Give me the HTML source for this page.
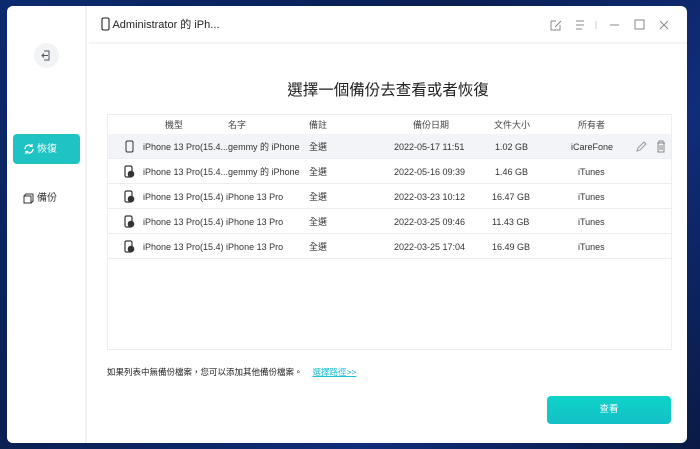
<!DOCTYPE html>
<html><head><meta charset="utf-8"><style>
*{margin:0;padding:0;box-sizing:border-box}
body{width:700px;height:449px;overflow:hidden;background:linear-gradient(135deg,#0b2a6e 0%,#0a1f52 40%,#102d7a 70%,#0a1a44 100%);font-family:"Liberation Sans","Noto Sans CJK TC",sans-serif;position:relative}
.win{position:absolute;left:7px;top:6px;width:680px;height:437px;background:#fff;border-radius:6px;overflow:hidden}
.side{position:absolute;left:0;top:0;width:80px;height:437px;background:#fff;border-right:2px solid #f0f1f4}
.back{position:absolute;left:27px;top:37px;width:25px;height:25px;border-radius:50%;background:#f2f3f6}
.nav1{position:absolute;left:6px;top:128px;width:67px;height:30px;background:#1fc3c3;border-radius:4px;color:#fff;font-size:10px;line-height:32px;padding-left:24px}
.nav2{position:absolute;left:16px;top:186px;font-size:10px;line-height:14px;color:#333;padding-left:14px}
.top{position:absolute;left:82px;top:0;right:0;height:38px;border-bottom:2px solid #f4f5f7}
.title{position:absolute;left:12px;top:10px;font-size:11px;color:#222}
h1{position:absolute;left:82px;right:0;top:72px;text-align:center;font-size:15.5px;font-weight:normal;color:#222}
.tbl{position:absolute;left:100px;top:108px;width:565px;height:236px;border:1px solid #eceef2}
.row{position:absolute;left:0;width:563px;height:25px;border-bottom:1px solid #eceef2;font-size:9px;color:#333}
.row span{position:absolute;top:0;line-height:26px;white-space:nowrap}
.hd{height:19px;top:0;border:none;color:#444}
.hd span{line-height:20px;font-size:9px}
.note{position:absolute;left:100px;top:359px;font-size:8.5px;line-height:14px;color:#222}
.note a{color:#1fbfd0;text-decoration:underline;margin-left:10px}
.btn{position:absolute;left:540px;top:390px;width:124px;height:28px;border-radius:4px;background:linear-gradient(#0fd3c9,#14bfc6);color:#fff;font-size:9.5px;text-align:center;line-height:28px}
</style></head><body>
<div class="win">
 <div class="side">
  <div class="back"><svg width="25" height="25"><path d="M10 8h5v9h-5M8 12.5h6M10 10.5l-2 2 2 2" fill="none" stroke="#555" stroke-width="1"/></svg></div>
  <div class="nav1"><svg style="position:absolute;left:10px;top:9px" width="12" height="12"><path d="M2 6a4 4 0 0 1 7-2.6M10 6a4 4 0 0 1-7 2.6M9 1v2.5H6.5M3 11V8.5h2.5" fill="none" stroke="#fff" stroke-width="1.3"/></svg>恢復</div>
  <div class="nav2"><svg style="position:absolute;left:0;top:1px" width="11" height="11"><path d="M1 3h7v7H1zM1 3l2-2h7v7l-2 2" fill="none" stroke="#333" stroke-width="1"/></svg>備份</div>
 </div>
 <div class="top">
  <div class="title"><svg style="vertical-align:-3px" width="9" height="14"><rect x="1" y="1" width="7" height="12" rx="1.5" fill="none" stroke="#222" stroke-width="1.1"/></svg> Administrator 的 iPh...</div>
  <svg style="position:absolute;left:460px;top:12px" width="120" height="14">
   <path d="M2 3h5M2 3v9h9V7M6 9l6-6" fill="none" stroke="#888" stroke-width="1"/>
   <path d="M27 3h8M27 7h8M27 11h6" stroke="#888" stroke-width="1"/>
   <path d="M47 3v8" stroke="#ccc"/>
   <path d="M61 7h9" stroke="#888"/>
   <rect x="86" y="2" width="9" height="9" fill="none" stroke="#888"/>
   <path d="M111 3l8 8M119 3l-8 8" stroke="#888"/>
  </svg>
 </div>
 <h1>選擇一個備份去查看或者恢復</h1>
 <div class="tbl">
  <div class="row hd"><span style="left:57px">機型</span><span style="left:120px">名字</span><span style="left:201px">備註</span><span style="left:305px">備份日期</span><span style="left:386px">文件大小</span><span style="left:470px">所有者</span></div>
  <div class="row" style="top:19px;background:#f3f4f7"><svg style="position:absolute;left:17px;top:6px" width="9" height="13"><rect x="1" y="1" width="7" height="11" rx="1.5" fill="none" stroke="#333"/></svg><span style="left:35px">iPhone 13 Pro(15.4...gemmy 的 iPhone</span><span style="left:201px">全選</span><span style="left:286px">2022-05-17 11:51</span><span style="left:387px">1.02 GB</span><span style="left:463px">iCareFone</span>
   <svg style="position:absolute;left:527px;top:6px" width="30" height="13"><path d="M2 11l1-3 6-6 2 2-6 6z" fill="none" stroke="#999"/><path d="M22 3h8M23 3v9h6V3M25 5v5M27 5v5M24 3V1h4v2" fill="none" stroke="#888"/></svg></div>
  <div class="row" style="top:44px"><svg style="position:absolute;left:16px;top:6px" width="11" height="13"><rect x="1" y="1" width="7" height="11" rx="1.5" fill="none" stroke="#333" stroke-width="1.2"/><circle cx="7" cy="9" r="3.3" fill="#333"/></svg><span style="left:35px">iPhone 13 Pro(15.4...gemmy 的 iPhone</span><span style="left:201px">全選</span><span style="left:286px">2022-05-16 09:39</span><span style="left:387px">1.46 GB</span><span style="left:470px">iTunes</span></div>
  <div class="row" style="top:69px"><svg style="position:absolute;left:16px;top:6px" width="11" height="13"><rect x="1" y="1" width="7" height="11" rx="1.5" fill="none" stroke="#333" stroke-width="1.2"/><circle cx="7" cy="9" r="3.3" fill="#333"/></svg><span style="left:35px">iPhone 13 Pro(15.4) iPhone 13 Pro</span><span style="left:201px">全選</span><span style="left:286px">2022-03-23 10:12</span><span style="left:384px">16.47 GB</span><span style="left:470px">iTunes</span></div>
  <div class="row" style="top:94px"><svg style="position:absolute;left:16px;top:6px" width="11" height="13"><rect x="1" y="1" width="7" height="11" rx="1.5" fill="none" stroke="#333" stroke-width="1.2"/><circle cx="7" cy="9" r="3.3" fill="#333"/></svg><span style="left:35px">iPhone 13 Pro(15.4) iPhone 13 Pro</span><span style="left:201px">全選</span><span style="left:286px">2022-03-25 09:46</span><span style="left:384px">11.43 GB</span><span style="left:470px">iTunes</span></div>
  <div class="row" style="top:119px"><svg style="position:absolute;left:16px;top:6px" width="11" height="13"><rect x="1" y="1" width="7" height="11" rx="1.5" fill="none" stroke="#333" stroke-width="1.2"/><circle cx="7" cy="9" r="3.3" fill="#333"/></svg><span style="left:35px">iPhone 13 Pro(15.4) iPhone 13 Pro</span><span style="left:201px">全選</span><span style="left:286px">2022-03-25 17:04</span><span style="left:384px">16.49 GB</span><span style="left:470px">iTunes</span></div>
 </div>
 <div class="note">如果列表中無備份檔案，您可以添加其他備份檔案。<a>選擇路徑&gt;&gt;</a></div>
 <div class="btn">查看</div>
</div>
</body></html>
